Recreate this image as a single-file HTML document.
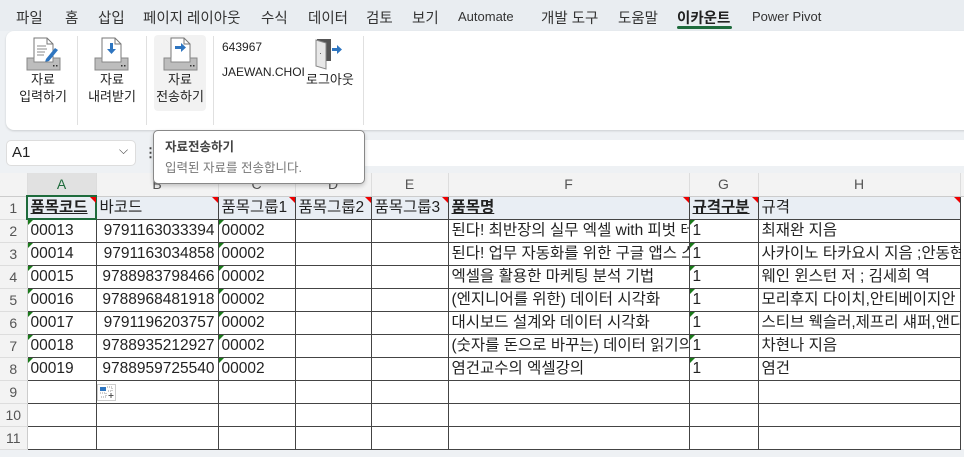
<!DOCTYPE html>
<html><head><meta charset="utf-8"><style>
*{margin:0;padding:0;box-sizing:border-box}
body{width:964px;height:457px;overflow:hidden;background:#eef1f4;font-family:"Liberation Sans","Noto Sans CJK KR",sans-serif;position:relative;color:#222}
.abs{position:absolute}
.tab{position:absolute;top:7px;font-size:14.5px;color:#333;white-space:nowrap}
.rib{position:absolute;left:6px;top:31px;width:980px;height:99px;background:#fff;border-radius:8px;box-shadow:0 1px 2px rgba(0,0,0,.15)}
.sep{position:absolute;top:36px;width:1px;height:89px;background:#e0e0e0}
.lbl{position:absolute;font-size:13px;color:#222;text-align:center;line-height:17px;white-space:nowrap}
table{position:absolute;left:0;top:173px;width:980px;border-collapse:collapse;table-layout:fixed;font-size:15.5px}
td{height:23px;border:1px solid #444;padding:0 3px;white-space:nowrap;overflow:hidden;position:relative;line-height:20px;background:#fff}
tr.ch td{background:#f3f3f3;border:none;border-right:1px solid #ddd;border-bottom:1px solid #ccc;text-align:center;color:#555;font-size:14px}
td.rh{background:#f3f3f3;border:none;border-bottom:1px solid #ddd;border-right:1px solid #ccc;text-align:center;color:#555;font-size:14px;padding:0}
tr.r1 td:not(.rh){background:#e9eef4}
.b{font-weight:bold;text-decoration:underline}
.r{text-align:right}
.red:after{content:"";position:absolute;right:0;top:0;border-top:6px solid #e00;border-left:6px solid transparent}
.grn:before{content:"";position:absolute;left:0;top:0;border-top:5px solid #1a7a1a;border-right:5px solid transparent}
td.ov{overflow:visible}
</style></head><body>
<div class="abs" style="left:0;top:0;width:964px;height:31px;background:#e9edf1"></div>
<div class="tab" style="left:16px">파일</div>
<div class="tab" style="left:65px">홈</div>
<div class="tab" style="left:98px">삽입</div>
<div class="tab" style="left:143px">페이지 레이아웃</div>
<div class="tab" style="left:261px">수식</div>
<div class="tab" style="left:308px">데이터</div>
<div class="tab" style="left:366px">검토</div>
<div class="tab" style="left:412px">보기</div>
<div class="tab" style="left:458px;font-size:13px;top:9px">Automate</div>
<div class="tab" style="left:541px">개발 도구</div>
<div class="tab" style="left:618px">도움말</div>
<div class="tab" style="left:677px;font-weight:bold;color:#222">이카운트</div>
<div class="abs" style="left:677px;top:26px;width:55px;height:3px;background:#1e6b3c;border-radius:2px"></div>
<div class="tab" style="left:752px;font-size:13px;top:9px">Power Pivot</div>

<div class="rib"></div>
<div class="abs" style="left:154px;top:35px;width:52px;height:76px;background:#f2f2f2;border-radius:4px"></div>
<div class="sep" style="left:77px"></div><div class="sep" style="left:146px"></div><div class="sep" style="left:213px"></div><div class="sep" style="left:363px"></div>

<svg class="abs" style="left:26px;top:37px" width="36" height="34" viewBox="0 0 36 34">
<path d="M8 1h13l6 6v18H8z" fill="#fff" stroke="#777"/><path d="M21 1v6h6" fill="none" stroke="#777"/>
<path d="M11 9h9M11 12h10M11 15h8M11 18h7" stroke="#888"/>
<path d="M20 22l9-11 3 2-9 11-4 1z" fill="#2e75c0"/>
<path d="M1 21h7v4h19v-4h7v12H1z" fill="#bdbdbd" stroke="#888"/><rect x="27" y="28" width="1.5" height="1.5" fill="#333"/><rect x="30" y="28" width="1.5" height="1.5" fill="#333"/></svg>
<svg class="abs" style="left:94px;top:37px" width="36" height="34" viewBox="0 0 36 34">
<path d="M8 1h13l6 6v18H8z" fill="#fff" stroke="#777"/><path d="M21 1v6h6" fill="none" stroke="#777"/>
<path d="M16 6h3v6h3l-4.5 5-4.5-5h3z" fill="#2e75c0"/>
<path d="M1 21h7v4h19v-4h7v12H1z" fill="#bdbdbd" stroke="#888"/><rect x="27" y="28" width="1.5" height="1.5" fill="#333"/><rect x="30" y="28" width="1.5" height="1.5" fill="#333"/></svg>
<svg class="abs" style="left:163px;top:37px" width="36" height="34" viewBox="0 0 36 34">
<path d="M8 1h13l6 6v18H8z" fill="#fff" stroke="#777"/><path d="M21 1v6h6" fill="none" stroke="#777"/>
<path d="M12 9h6V6l5 4.5-5 4.5v-3h-6z" fill="#2e75c0"/>
<path d="M1 21h7v4h19v-4h7v12H1z" fill="#bdbdbd" stroke="#888"/><rect x="27" y="28" width="1.5" height="1.5" fill="#333"/><rect x="30" y="28" width="1.5" height="1.5" fill="#333"/></svg>
<div class="lbl" style="left:14px;top:71px;width:58px">자료<br>입력하기</div>
<div class="lbl" style="left:82px;top:71px;width:60px">자료<br>내려받기</div>
<div class="lbl" style="left:151px;top:71px;width:58px">자료<br>전송하기</div>
<div class="lbl" style="left:222px;top:39px;text-align:left;font-size:12px">643967</div>
<div class="lbl" style="left:222px;top:64px;text-align:left;font-size:12px">JAEWAN.CHOI</div>
<svg class="abs" style="left:314px;top:38px" width="30" height="32" viewBox="0 0 30 32">
<rect x="3" y="1" width="14" height="22" fill="#555"/><path d="M2 2l10 3v26L2 28z" fill="#e8e8e8" stroke="#888"/>
<rect x="6" y="15" width="1" height="1" fill="#666"/><path d="M18 10h5V7l5 4.5-5 4.5v-3h-5z" fill="#2e75c0"/></svg>
<div class="lbl" style="left:306px;top:71px">로그아웃</div>

<div class="abs" style="left:6px;top:140px;width:130px;height:26px;background:#fff;border-radius:5px;border:1px solid #ddd"></div>
<div class="abs" style="left:12px;top:144px;font-size:15px">A1</div>
<div class="abs" style="left:119px;top:143px;font-size:12px;color:#444">⌵</div>
<div class="abs" style="left:144px;top:145px;font-size:13px;color:#444;font-weight:bold">⋮</div>
<div class="abs" style="left:153px;top:140px;width:811px;height:26px;background:#fff"></div>

<table>
<colgroup><col style="width:27px"><col style="width:69px"><col style="width:122px"><col style="width:77px"><col style="width:76px"><col style="width:77px"><col style="width:241px"><col style="width:69px"><col style="width:202px"><col style="width:20px"></colgroup>
<tr class="ch"><td></td><td style="background:#e1e1e1;color:#1e6b3c;border-bottom:2px solid #1e6b3c">A</td><td>B</td><td>C</td><td>D</td><td>E</td><td>F</td><td>G</td><td>H</td><td></td></tr>
<tr class="r1"><td class="rh">1</td><td class="red" style="outline:2px solid #1e6b3c;outline-offset:-1px"><span class="b">품목코드</span></td><td class="red">바코드</td><td class="red">품목그룹1</td><td class="red">품목그룹2</td><td class="red">품목그룹3</td><td class="red"><span class="b">품목명</span></td><td class="red"><span class="b">규격구분</span></td><td class="red">규격</td><td style="border:none;background:#fff"></td></tr>
<tr><td class="rh">2</td><td class="grn">00013</td><td class="r">9791163033394</td><td class="grn">00002</td><td></td><td></td><td>된다! 최반장의 실무 엑셀 with 피벗 테이블</td><td class="grn">1</td><td class="ov">최재완 지음</td><td style="border:none"></td></tr>
<tr><td class="rh">3</td><td class="grn">00014</td><td class="r">9791163034858</td><td class="grn">00002</td><td></td><td></td><td>된다! 업무 자동화를 위한 구글 앱스 스크립트</td><td class="grn">1</td><td class="ov">사카이노 타카요시 지음 ;안동현</td><td style="border:none"></td></tr>
<tr><td class="rh">4</td><td class="grn">00015</td><td class="r">9788983798466</td><td class="grn">00002</td><td></td><td></td><td>엑셀을 활용한 마케팅 분석 기법</td><td class="grn">1</td><td class="ov">웨인 윈스턴 저 ; 김세희 역</td><td style="border:none"></td></tr>
<tr><td class="rh">5</td><td class="grn">00016</td><td class="r">9788968481918</td><td class="grn">00002</td><td></td><td></td><td>(엔지니어를 위한) 데이터 시각화</td><td class="grn">1</td><td class="ov">모리후지 다이치,안티베이지안 지음</td><td style="border:none"></td></tr>
<tr><td class="rh">6</td><td class="grn">00017</td><td class="r">9791196203757</td><td class="grn">00002</td><td></td><td></td><td>대시보드 설계와 데이터 시각화</td><td class="grn">1</td><td class="ov">스티브 웩슬러,제프리 섀퍼,앤디</td><td style="border:none"></td></tr>
<tr><td class="rh">7</td><td class="grn">00018</td><td class="r">9788935212927</td><td class="grn">00002</td><td></td><td></td><td>(숫자를 돈으로 바꾸는) 데이터 읽기의 기술</td><td class="grn">1</td><td class="ov">차현나 지음</td><td style="border:none"></td></tr>
<tr><td class="rh">8</td><td class="grn">00019</td><td class="r">9788959725540</td><td class="grn">00002</td><td></td><td></td><td>염건교수의 엑셀강의</td><td class="grn">1</td><td class="ov">염건</td><td style="border:none"></td></tr>
<tr><td class="rh">9</td><td></td><td></td><td></td><td></td><td></td><td></td><td></td><td></td><td style="border:none"></td></tr>
<tr><td class="rh">10</td><td></td><td></td><td></td><td></td><td></td><td></td><td></td><td></td><td style="border:none"></td></tr>
<tr><td class="rh">11</td><td></td><td></td><td></td><td></td><td></td><td></td><td></td><td></td><td style="border:none"></td></tr>
</table>
<svg class="abs" style="left:97px;top:384px" width="19" height="17" viewBox="0 0 19 17"><rect x=".5" y=".5" width="18" height="16" fill="#fff" stroke="#ccc"/><rect x="3" y="3" width="6" height="4" fill="#2e75c0"/><path d="M10 3h5v4h-5M3 9h6v4H3" fill="none" stroke="#999" stroke-dasharray="1 1"/><path d="M14 9v5M11.5 11.5h5" stroke="#555"/></svg>

<div class="abs" style="left:153px;top:130px;width:212px;height:54px;background:#fff;border:1px solid #888;border-radius:5px;box-shadow:0 2px 4px rgba(0,0,0,.2)"></div>
<div class="abs" style="left:165px;top:136px;font-size:12.5px;font-weight:bold;color:#444">자료전송하기</div>
<div class="abs" style="left:165px;top:157px;font-size:12.5px;color:#777">입력된 자료를 전송합니다.</div>
</body></html>
